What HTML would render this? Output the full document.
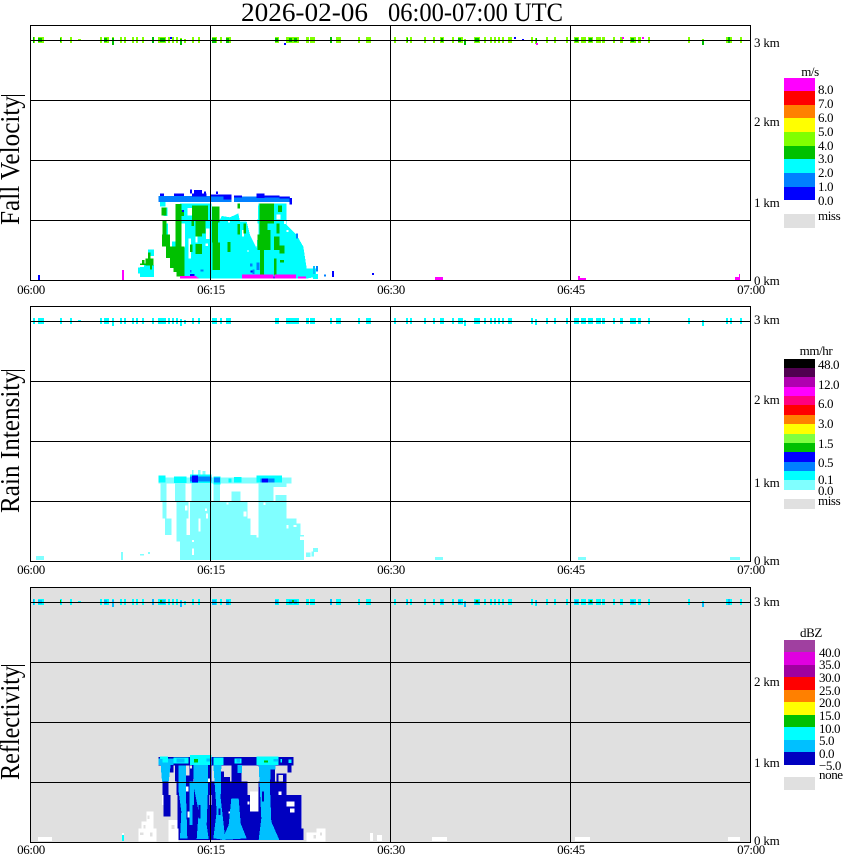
<!DOCTYPE html>
<html><head><meta charset="utf-8"><title>2026-02-06 06:00-07:00 UTC</title>
<style>
html,body{margin:0;padding:0;background:#fff;width:850px;height:868px;overflow:hidden}
svg{display:block;shape-rendering:crispEdges}
text{font-family:"Liberation Serif",serif;fill:#000}
.t{font-size:13px;text-anchor:middle;letter-spacing:-.35px}
.k{font-size:13px;letter-spacing:-.2px}
.l{font-size:13px;letter-spacing:-.4px}
.a{font-size:27px}
</style></head><body>
<svg width="850" height="868" viewBox="0 0 850 868" xmlns="http://www.w3.org/2000/svg">
<defs>
<path id="tA" d="M33 37h2v6h-2zM38 37h6v6h-6zM60 37h2v6h-2zM70 37h2v6h-2zM78 39h3v2h-3zM100 37h2v6h-2zM104 37h5v6h-5zM112 37h2v8h-2zM120 37h2v6h-2zM124 37h2v6h-2zM132 37h2v6h-2zM136 37h2v6h-2zM142 37h2v6h-2zM152 37h2v6h-2zM158 37h8v6h-8zM168 37h2v6h-2zM172 37h2v6h-2zM176 37h2v6h-2zM180 38h2v7h-2zM184 39h2v4h-2zM192 37h2v6h-2zM198 37h2v6h-2zM212 37h5v6h-5zM220 37h2v6h-2zM226 37h5v6h-5zM275 37h4v6h-4zM286 37h2v6h-2zM288 37h6v6h-6zM294 37h5v6h-5zM306 37h3v6h-3zM310 37h5v6h-5zM330 37h2v6h-2zM336 37h5v6h-5zM358 37h2v6h-2zM366 37h5v6h-5zM394 37h2v6h-2zM406 37h2v6h-2zM410 37h2v6h-2zM424 37h2v6h-2zM433 37h2v6h-2zM440 37h4v6h-4zM452 37h2v6h-2zM458 37h5v6h-5zM464 39h2v6h-2zM474 37h6v6h-6zM484 37h2v6h-2zM490 37h2v6h-2zM494 37h2v6h-2zM498 37h2v6h-2zM502 37h2v6h-2zM508 37h4v6h-4zM531 37h2v6h-2zM535 38h2v6h-2zM546 37h2v6h-2zM554 37h2v6h-2zM566 37h2v6h-2zM574 37h5v6h-5zM581 37h5v6h-5zM588 37h5v6h-5zM596 37h5v6h-5zM602 37h3v6h-3zM613 37h2v6h-2zM620 37h3v6h-3zM630 37h6v6h-6zM638 37h3v6h-3zM648 37h2v6h-2zM688 37h2v6h-2zM702 39h2v6h-2zM726 37h2v6h-2zM730 37h2v6h-2zM740 37h2v6h-2z"/>
<path id="tB" d="M33 37h1v6h-1zM38 38h4v4h-4zM60 38h1v4h-1zM104 38h3v4h-3zM112 38h2v7h-2zM152 37h2v6h-2zM160 38h5v4h-5zM180 39h2v6h-2zM212 38h4v5h-4zM226 38h3v5h-3zM275 38h3v4h-3zM289 38h3v4h-3zM294 38h3v4h-3zM330 37h2v6h-2zM407 38h1v4h-1zM441 38h2v4h-2zM458 38h3v4h-3zM475 38h4v4h-4zM464 41h2v4h-2zM536 38h1v5h-1zM575 38h3v4h-3zM589 38h3v4h-3zM631 38h3v4h-3zM702 41h2v4h-2zM728 37h2v6h-2z"/>
</defs>

<!-- reflectivity background -->
<rect x="30" y="587" width="720" height="255" fill="#e0e0e0"/>

<!-- ticks -->
<use href="#tA" fill="#80ff00"/><use href="#tB" fill="#00c000"/>
<path fill="#0000ff" d="M170 37h2v2h-2zM284 43h2v2h-2zM514 37h2v2h-2zM522 39h2v1h-2z"/>
<path fill="#ff00ff" d="M536 43h2v2h-2zM622 37h2v2h-2zM642 37h2v2h-2z"/>
<g transform="translate(0,281)"><use href="#tA" fill="#00ffff"/></g>
<g transform="translate(0,562)"><use href="#tA" fill="#00ffff"/><use href="#tB" fill="#00c0ff"/>
<path fill="#00c000" d="M60 38h1v3h-1zM160 38h2v3h-2zM292 38h2v3h-2zM476 38h2v3h-2zM590 38h2v3h-2z"/></g>

<!-- Panel 1 data -->
<g transform="translate(130,180) scale(.33333)">
<path fill="#00ffff" d="M165 70H245V118H270L275 108 300 112 325 100 330 125H350L360 165 380 205 385 70H470V135L500 165 520 200 530 265H558V290L530 296H150V240L165 200Z"/>
<path fill="#00ffff" d="M90 66h16v14H90zM100 130h14v50h-14zM126 185h16v30h-16zM30 255h42v36H30zM24 262h12v18H24zM54 208h18v20H54zM100 82h12v26h-12zM150 70h16v60h-16z"/>
<path fill="#fff" d="M175 175h8v60h-8zM228 145h10v32h-10zM172 84h16v22h-16zM226 84h8v14h-8zM336 150h6v20h-6zM440 104h12v14h-12zM380 130h6v50h-6zM470 150h6v6h-6zM30 255h12v6H30zM196 170h6v18h-6zM226 190h8v8h-8zM462 120h6v12h-6zM294 122h6v6h-6zM352 210h4v6h-4z"/>
<path fill="#00c000" d="M95 82h14v24H95zM97 120h12v44H97zM96 164h24v36H96zM108 200h42v34h-42zM120 234h30v30h-30zM130 264h10v12h-10zM136 72h18v128h-18zM140 200h24v90h-24zM154 90h8v18h-8zM186 76h48v44h-48zM196 120h20v50h-20zM184 120h8v18h-8zM196 192h20v30h-20zM180 194h8v22h-8zM246 80h22v48h-22zM246 128h18v60h-18zM248 188h22v82h-22zM292 186h10v30h-10zM322 70h8v16h-8zM322 132h8v32h-8zM340 130h8v30h-8zM388 70h44v60h-44zM388 130h24v34h-24zM382 164h30v46h-30zM390 210h12v76h-12zM412 150h10v60h-10zM432 170h16v40h-16zM448 196h16v24h-16zM432 236h8v50h-8zM444 76h12v20h-12zM440 130h8v30h-8zM450 240h12v8h-12zM46 236h24v20H46zM36 240h8v10h-8zM54 218h8v18h-8zM60 255h6v14h-6zM30 250h24v5H30zM216 120h10v40h-10z"/>
<path fill="#0080ff" d="M85 48H305V66H85zM312 50H480V66H312zM360 250h8v10h-8zM368 268h6v14h-6zM380 248h8v22h-8zM180 270h4v8h-4zM212 268h8v6h-8zM498 160h6v16h-6zM558 258h6v16h-6zM582 284h6v6h-6z"/>
<path fill="#0000ff" d="M90 40h12v8H90zM132 40h30v8h-30zM180 28h6v12h-6zM186 40h44v10h-44zM192 30h24v10h-24zM222 34h6v6h-6zM240 44h64v14h-24V50h-40zM258 34h6v8h-6zM312 46h24v6h-24zM380 40h24v14h-24zM404 46h44v6h-44zM448 50h30v6h-30zM478 54h8v20h-8zM180 282h14v6h-14zM428 290h6v6h-6zM362 272h6v6h-6zM156 90h6v6h-6z"/>
<path fill="#ff00ff" d="M150 288h50v8h-50zM336 284h94v12h-94zM434 284h64v12h-64zM504 290h24v6h-24zM200 292h6v4h-6z"/>
</g>
<path fill="#0000ff" d="M38 275h2v5h-2zM332 271h2v6h-2zM372 273h2v2h-2z"/>
<path fill="#ff00ff" d="M122 270h2v10h-2zM435 277h8v3h-8zM578 276h2v4h-2zM580 278h6v2h-6zM735 277h5v3h-5zM739 274h1v3h-1z"/>
<path fill="#00c0ff" d="M313 266h2v8h-2z"/><path fill="#00ffff" d="M313 274h5v5h-5z"/>

<!-- Panel 2 data -->
<g transform="translate(130,465) scale(.33333)">
<path fill="#80ffff" d="M92 50h18v60H92zM135 50h32v60h-32zM185 50h60v60h-60zM250 50h20v60h-20zM305 80h26v30h-26zM385 50h45v60h-45zM430 50h40v16h-40zM436 90h34v20h-34zM97 110h13v50H97zM140 110h35v50h-35zM180 110h172v50H180zM385 110h85v50h-85zM105 160h20v50h-20zM140 160h30v50h-30zM180 160h182v50H180zM385 160h115v50H385zM500 175h12v35h-12zM150 210h372v75H150zM140 210h10v20h-10z"/>
<path fill="#fff" d="M165 122h8v14h-8zM228 145h6v15h-6zM186 225h6v6h-6zM186 250h6v20h-6zM340 140h10v14h-10zM470 120h8v12h-8zM470 180h6v10h-6zM490 180h10v6h-10zM380 210h6v8h-6zM510 215h12v10h-12zM225 130h6v8h-6zM290 112h6v6h-6zM205 160h6v40h-6zM400 112h6v8h-6z"/>
<path fill="#80ffff" d="M30 267h12v5H30zM54 261h6v6h-6zM528 262h14v14h-14zM544 260h8v14h-8zM186 15h4v14h-4zM204 15h8v14h-8zM218 18h8v12h-8z"/>
<path fill="#80ffff" d="M85 38H485V55H85z"/>
<path fill="#00ffff" d="M85 32h22v20H85zM132 34h38v20h-38zM180 28h64v26h-64zM250 34h22v24h-22zM312 36h22v16h-22zM380 32h76v20h-76zM296 40h8v12h-8z"/>
<path fill="#0080ff" d="M180 34h64v16h-64zM252 38h18v14h-18zM392 40h42v12h-42z"/>
<path fill="#0000ff" d="M186 32h18v20h-18zM396 40h18v12h-18z"/>
</g>
<path fill="#80ffff" d="M36 556h8v4h-8zM121 552h2v8h-2zM435 557h8v3h-8zM578 557h8v3h-8zM730 557h10v3h-10zM313 548h5v4h-5z"/>

<!-- Panel 3 data -->
<g transform="translate(130,745) scale(.33333)">
<path fill="#fff" d="M50 200h20v30H50zM35 230h35v20H35zM25 250h55v40H25zM115 225h30v65h-30zM530 262h30v28h-30zM560 250h26v40h-26zM360 140h24v60h-24zM500 150h16v110h-16zM96 150h10v30H96z"/>
<path fill="#e0e0e0" d="M40 240h6v10h-6zM30 262h10v8h-10zM60 262h8v12h-8zM125 240h8v12h-8zM550 270h8v10h-8zM570 262h6v10h-6zM52 212h6v10h-6z"/>
<path fill="#0000c0" d="M85 36H490V62H85zM115 62h15v20h-15zM135 62h55v48h-55zM228 62h17v48h-17zM305 62h30v48h-30zM420 62h15v48h-15zM440 85h30v25h-30zM97 110h18v40H97zM100 150h22v65h-22zM140 110h212v40H140zM385 110h85v40h-85zM143 150h217v50H143zM385 150h130v50H385zM143 200h372v50H143zM146 250h374v35H146zM270 80h30v30h-30zM472 62h12v20h-12z"/>
<path fill="#e0e0e0" d="M150 62h6v16h-6zM168 62h10v30h-10zM282 62h18v34h-18zM445 90h14v20h-14zM355 112h10v14h-10zM180 62h6v8h-6z"/>
<path fill="#fff" d="M168 125h8v14h-8zM470 170h24v14h-24zM480 190h14v12h-14zM446 140h8v10h-8zM238 150h6v30h-6zM352 170h6v8h-6zM408 140h8v10h-8zM296 200h6v6h-6zM172 200h6v18h-6zM232 100h8v14h-8zM200 118h6v10h-6z"/>
<path fill="#00c0ff" d="M85 40H130V60H122L116 110H96L92 60H85ZM145 62H168V150L172 280H150L154 200 146 140ZM190 50H234V130L230 240 236 282H200L206 200 192 130ZM250 60H274L272 160 280 230 286 285 250 280 260 200ZM276 285L296 240 304 160 326 160 332 235 350 280ZM386 60H422L420 130 424 230 448 285H386L394 220ZM420 60h16v14h-16zM322 60h14v24h-14zM178 110h14v70h-14zM178 180h10v60h-10z"/>
<path fill="#0000c0" d="M206 180h6v40h-6zM396 140h6v30h-6zM308 110h10v16h-10zM266 190h6v20h-6z"/>
<path fill="#00ffff" d="M90 34h24v18H90zM130 38h46v18h-46zM180 30h64v30h-64zM250 38h30v22h-30zM314 40h20v16h-20zM380 34h66v26h-66zM452 42h4v10h-4zM476 44h8v10h-8z"/>
<path fill="#00c0ff" d="M85 42h12v12H85zM140 40h24v12h-24zM230 40h14v10h-14zM320 42h10v10h-10zM430 42h14v8h-14z"/>
<path fill="#00c000" d="M192 42h12v10h-12zM402 46h12v6h-12z"/>
</g>
<path fill="#fff" d="M38 837h14v4H38zM370 833h3v8h-3zM377 835h5v6h-5zM432 837h15v4h-15zM575 837h15v4h-15zM728 837h12v4h-12zM122 833h2v2h-2z"/>
<rect x="122" y="835" width="2" height="6" fill="#00ffff"/>

<!-- Grid panels -->
<g fill="#000">
<path d="M30 25h720v1H30zM30 25h1v256h-1zM750 25h1v256h-1zM210 25h1v255h-1zM390 25h1v255h-1zM570 25h1v255h-1zM30 40h720v1H30zM30 100h720v1H30zM30 160h720v1H30zM30 220h720v1H30zM30 280h721v1H30z"/>
<path d="M30 306h720v1H30zM30 306h1v256h-1zM750 306h1v256h-1zM210 306h1v255h-1zM390 306h1v255h-1zM570 306h1v255h-1zM30 321h720v1H30zM30 381h720v1H30zM30 441h720v1H30zM30 501h720v1H30zM30 561h721v1H30z"/>
<path d="M30 587h720v1H30zM30 587h1v256h-1zM750 587h1v256h-1zM210 587h1v255h-1zM390 587h1v255h-1zM570 587h1v255h-1zM30 602h720v1H30zM30 662h720v1H30zM30 722h720v1H30zM30 782h720v1H30zM30 842h721v1H30z"/>
<path d="M1 95h24v1H1zM1 370h24v1H1zM1 665h24v1H1z"/>
</g>

<!-- Title -->
<text x="241" y="21" style="font-size:26px" textLength="127" lengthAdjust="spacingAndGlyphs">2026-02-06</text>
<text x="388" y="21" style="font-size:26px" textLength="175" lengthAdjust="spacingAndGlyphs">06:00-07:00 UTC</text>

<!-- Axis titles -->
<text class="a" transform="translate(19,225) rotate(-90)" textLength="129" lengthAdjust="spacingAndGlyphs">Fall Velocity</text>
<text class="a" transform="translate(19,513) rotate(-90)" textLength="142" lengthAdjust="spacingAndGlyphs">Rain Intensity</text>
<text class="a" transform="translate(19,780) rotate(-90)" textLength="114" lengthAdjust="spacingAndGlyphs">Reflectivity</text>

<!-- Time labels -->
<text class="t" x="31" y="294">06:00</text><text class="t" x="211" y="294">06:15</text><text class="t" x="391" y="294">06:30</text><text class="t" x="571" y="294">06:45</text><text class="t" x="751" y="294">07:00</text>
<text class="t" x="31" y="574">06:00</text><text class="t" x="211" y="574">06:15</text><text class="t" x="391" y="574">06:30</text><text class="t" x="571" y="574">06:45</text><text class="t" x="751" y="574">07:00</text>
<text class="t" x="31" y="854">06:00</text><text class="t" x="211" y="854">06:15</text><text class="t" x="391" y="854">06:30</text><text class="t" x="571" y="854">06:45</text><text class="t" x="751" y="854">07:00</text>

<!-- km labels -->
<text class="k" x="754" y="47">3 km</text><text class="k" x="754" y="126">2 km</text><text class="k" x="754" y="207">1 km</text><text class="k" x="754" y="285">0 km</text>
<text class="k" x="754" y="324">3 km</text><text class="k" x="754" y="404">2 km</text><text class="k" x="754" y="487">1 km</text><text class="k" x="754" y="565">0 km</text>
<text class="k" x="754" y="606">3 km</text><text class="k" x="754" y="686">2 km</text><text class="k" x="754" y="767">1 km</text><text class="k" x="754" y="845">0 km</text>

<!-- Colorbar 1 -->
<rect x="784" y="78" width="31" height="13" fill="#ff00ff"/><rect x="784" y="91" width="31" height="14" fill="#ff0000"/><rect x="784" y="105" width="31" height="13" fill="#ff8000"/><rect x="784" y="118" width="31" height="14" fill="#ffff00"/><rect x="784" y="132" width="31" height="14" fill="#80ff00"/><rect x="784" y="146" width="31" height="13" fill="#00c000"/><rect x="784" y="159" width="31" height="14" fill="#00ffff"/><rect x="784" y="173" width="31" height="14" fill="#0080ff"/><rect x="784" y="187" width="31" height="13" fill="#0000ff"/><rect x="784" y="214" width="31" height="14" fill="#e0e0e0"/>
<text class="l" x="810" y="76" text-anchor="middle">m/s</text>
<text class="l" x="818" y="94">8.0</text><text class="l" x="818" y="108">7.0</text><text class="l" x="818" y="122">6.0</text><text class="l" x="818" y="136">5.0</text><text class="l" x="818" y="150">4.0</text><text class="l" x="818" y="163">3.0</text><text class="l" x="818" y="177">2.0</text><text class="l" x="818" y="191">1.0</text><text class="l" x="818" y="205">0.0</text><text class="l" x="818" y="220">miss</text>

<!-- Colorbar 2 -->
<rect x="784" y="359" width="31" height="9" fill="#000"/><rect x="784" y="368" width="31" height="9" fill="#500050"/><rect x="784" y="377" width="31" height="10" fill="#b000b0"/><rect x="784" y="387" width="31" height="9" fill="#ff00ff"/><rect x="784" y="396" width="31" height="9" fill="#ff0080"/><rect x="784" y="405" width="31" height="10" fill="#ff0000"/><rect x="784" y="415" width="31" height="9" fill="#ff8000"/><rect x="784" y="424" width="31" height="10" fill="#ffff00"/><rect x="784" y="434" width="31" height="9" fill="#80ff40"/><rect x="784" y="443" width="31" height="9" fill="#00c000"/><rect x="784" y="452" width="31" height="10" fill="#0000ff"/><rect x="784" y="462" width="31" height="9" fill="#0080ff"/><rect x="784" y="471" width="31" height="9" fill="#00ffff"/><rect x="784" y="480" width="31" height="10" fill="#80ffff"/><rect x="784" y="499" width="31" height="10" fill="#e0e0e0"/>
<text class="l" x="816" y="355" text-anchor="middle">mm/hr</text>
<text class="l" x="818" y="369">48.0</text><text class="l" x="818" y="389">12.0</text><text class="l" x="818" y="408">6.0</text><text class="l" x="818" y="428">3.0</text><text class="l" x="818" y="448">1.5</text><text class="l" x="818" y="467">0.5</text><text class="l" x="818" y="484">0.1</text><text class="l" x="818" y="495">0.0</text><text class="l" x="818" y="505">miss</text>

<!-- Colorbar 3 -->
<rect x="784" y="640" width="31" height="12" fill="#a040a0"/><rect x="784" y="652" width="31" height="13" fill="#e000e0"/><rect x="784" y="665" width="31" height="12" fill="#a000a0"/><rect x="784" y="677" width="31" height="13" fill="#ff0000"/><rect x="784" y="690" width="31" height="12" fill="#ff8000"/><rect x="784" y="702" width="31" height="13" fill="#ffff00"/><rect x="784" y="715" width="31" height="12" fill="#00c000"/><rect x="784" y="727" width="31" height="13" fill="#00ffff"/><rect x="784" y="740" width="31" height="12" fill="#00c0ff"/><rect x="784" y="752" width="31" height="13" fill="#0000c0"/><rect x="784" y="777" width="31" height="13" fill="#e0e0e0"/>
<text class="l" x="811" y="637" text-anchor="middle">dBZ</text>
<text class="l" x="819" y="657">40.0</text><text class="l" x="819" y="669">35.0</text><text class="l" x="819" y="682">30.0</text><text class="l" x="819" y="695">25.0</text><text class="l" x="819" y="707">20.0</text><text class="l" x="819" y="720">15.0</text><text class="l" x="819" y="733">10.0</text><text class="l" x="819" y="745">5.0</text><text class="l" x="819" y="758">0.0</text><text class="l" x="819" y="770">−5.0</text><text class="l" x="819" y="779">none</text>
</svg>
</body></html>
